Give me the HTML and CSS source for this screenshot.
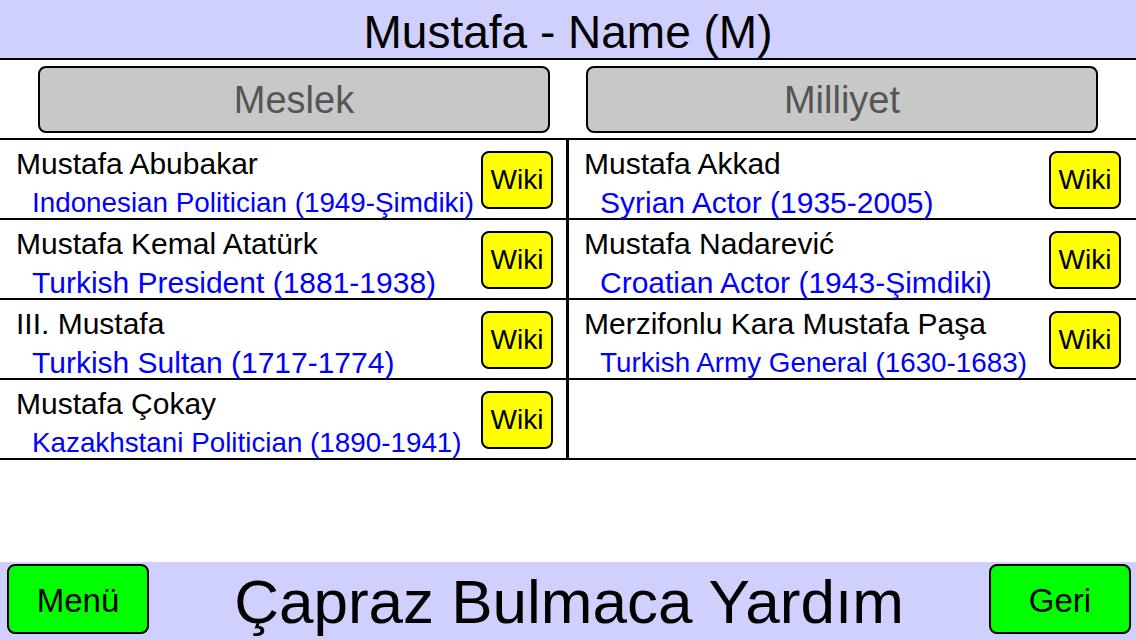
FILE: index.html
```html
<!DOCTYPE html>
<html lang="tr">
<head>
    <meta charset="UTF-8">
    <title>Mustafa - Name (M)</title>
    <link rel="stylesheet" href="styles.css">
</head>

<body>
<div id="page">
    <div id="header">Mustafa - Name (M)</div>

    <div id="filters">
        <div class="filter">Meslek</div>
        <div class="filter">Milliyet</div>
    </div>

    <div id="list">
        <div class="cell">
            <div class="info">
                <div class="name">Mustafa Abubakar</div>
                <div class="job fit">Indonesian Politician (1949-Şimdiki)</div>
            </div>
            <span class="wiki">Wiki</span>
        </div>
        <div class="cell">
            <div class="info">
                <div class="name">Mustafa Akkad</div>
                <div class="job">Syrian Actor (1935-2005)</div>
            </div>
            <span class="wiki">Wiki</span>
        </div>
        <div class="cell">
            <div class="info">
                <div class="name">Mustafa Kemal Atatürk</div>
                <div class="job">Turkish President (1881-1938)</div>
            </div>
            <span class="wiki">Wiki</span>
        </div>
        <div class="cell">
            <div class="info">
                <div class="name">Mustafa Nadarević</div>
                <div class="job">Croatian Actor (1943-Şimdiki)</div>
            </div>
            <span class="wiki">Wiki</span>
        </div>
        <div class="cell">
            <div class="info">
                <div class="name">III. Mustafa</div>
                <div class="job">Turkish Sultan (1717-1774)</div>
            </div>
            <span class="wiki">Wiki</span>
        </div>
        <div class="cell">
            <div class="info">
                <div class="name">Merzifonlu Kara Mustafa Paşa</div>
                <div class="job fit">Turkish Army General (1630-1683)</div>
            </div>
            <span class="wiki">Wiki</span>
        </div>
        <div class="cell">
            <div class="info">
                <div class="name">Mustafa Çokay</div>
                <div class="job fit">Kazakhstani Politician (1890-1941)</div>
            </div>
            <span class="wiki">Wiki</span>
        </div>
        <div class="cell"></div>
    </div>

    <div id="spacer"></div>

    <div id="footer">
        <span class="nav">Menü</span>
        <div id="title">Çapraz Bulmaca Yardım</div>
        <span class="nav">Geri</span>
    </div>
</div>
</body>
</html>
```

FILE: styles.css
```css
*{
    margin:0;
    padding:0;
    box-sizing: border-box;
}
body{
    font-family: "Liberation Sans", Arial, sans-serif;
    color: #000;
    background: #fff;
}

#page{
    width: 1136px;
    height: 640px;
    display: flex;
    flex-direction: column;
    overflow: hidden;
}

#header{
    height: 60px;
    background: #d0d0ff;
    border-bottom: 2px solid #000;
    font-size: 46px;
    line-height: 51px;
    padding-top: 7px;
    text-align: center;
}

#filters{
    display: grid;
    grid-template-columns: 512px 512px;
    column-gap: 36px;
    padding: 6px 38px 5px;
}
.filter{
    height: 67px;
    background: #c8c8c8;
    border: 2px solid #000;
    border-radius: 8px;
    color: #555;
    font-size: 38px;
    line-height: 61px;
    padding-top: 2px;
    text-align: center;
}

#list{
    display: grid;
    grid-template-columns: 566px 567px;
    grid-auto-rows: 78px;
    column-gap: 3px;
    row-gap: 2px;
    background: #000;
    border-top: 2px solid #000;
    padding-bottom: 2px;
}
.cell{
    background: #fff;
    display: flex;
    justify-content: space-between;
    align-items: flex-start;
    padding: 4px 13px 0 16px;
}
.cell:nth-child(even){
    padding: 4px 15px 0 15px;
}
.info{
    white-space: nowrap;
}
.name{
    font-size: 30px;
    line-height: 39px;
}
.job{
    font-size: 30px;
    line-height: 39px;
    color: #0000ff;
    padding-left: 16px;
}
.job.fit{
    font-size: 27.8px;
}
.wiki{
    width: 72px;
    height: 58px;
    margin-top: 7px;
    background: #ffff00;
    border: 2px solid #000;
    border-radius: 8px;
    font-size: 28px;
    line-height: 54px;
    text-align: center;
}

#spacer{
    flex: 1;
}

#footer{
    height: 78px;
    background: #d0d0ff;
    display: flex;
    align-items: flex-start;
    padding: 2px 5px 0 7px;
}
.nav{
    width: 142px;
    height: 70px;
    background: #00ff00;
    border: 2px solid #000;
    border-radius: 8px;
    font-size: 33px;
    line-height: 62px;
    padding-top: 4px;
    text-align: center;
}
#title{
    flex: 1;
    text-align: center;
    font-size: 62px;
    line-height: 76px;
    padding-top: 0;
}
```
